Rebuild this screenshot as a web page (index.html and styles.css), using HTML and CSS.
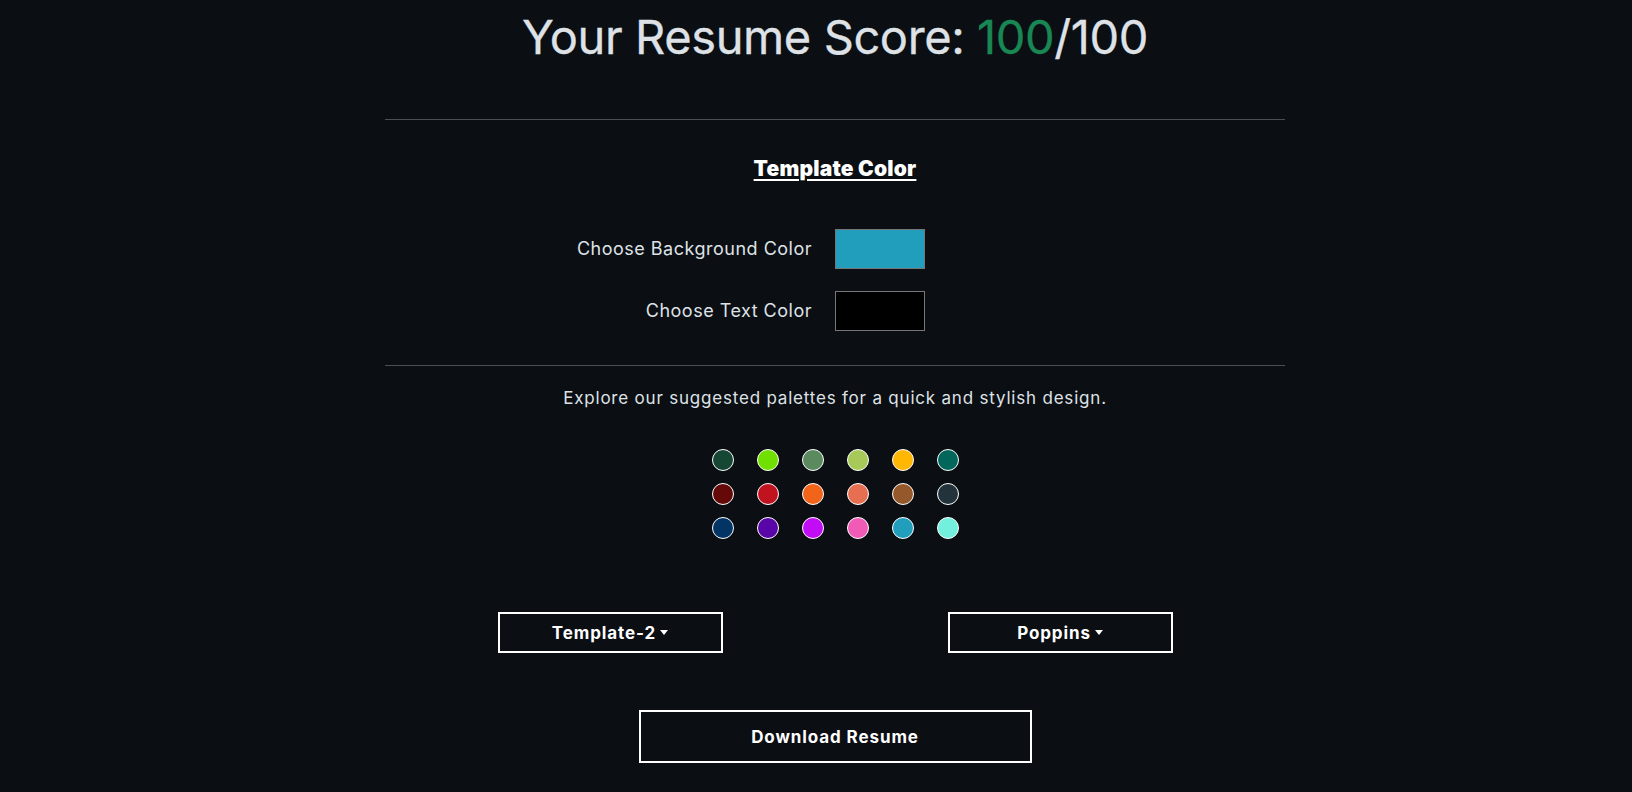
FILE: index.html
```html
<!DOCTYPE html>
<html lang="en">
<head>
<meta charset="utf-8">
<title>Resume Score</title>
<link rel="stylesheet" href="styles.css">
</head>
<body>
<main class="page">
  <h1 class="score">Your Resume Score: <span class="score-value">100</span>/100</h1>
  <hr class="divider divider-top">
  <h2 class="section-title">Template Color</h2>
  <div class="color-rows">
    <label class="color-label">Choose Background Color</label>
    <div class="color-cell"><span class="color-input swatch-bg"></span></div>
    <label class="color-label">Choose Text Color</label>
    <div class="color-cell"><span class="color-input swatch-text"></span></div>
  </div>
  <hr class="divider divider-mid">
  <p class="explore">Explore our suggested palettes for a quick and stylish design.</p>
  <div class="palettes">
    <span class="dot c1"></span><span class="dot c2"></span><span class="dot c3"></span><span class="dot c4"></span><span class="dot c5"></span><span class="dot c6"></span>
    <span class="dot c7"></span><span class="dot c8"></span><span class="dot c9"></span><span class="dot c10"></span><span class="dot c11"></span><span class="dot c12"></span>
    <span class="dot c13"></span><span class="dot c14"></span><span class="dot c15"></span><span class="dot c16"></span><span class="dot c17"></span><span class="dot c18"></span>
  </div>
  <div class="dropdowns">
    <div class="dropdown-col"><button class="btn dropdown-toggle">Template-2</button></div>
    <div class="dropdown-col"><button class="btn dropdown-toggle">Poppins</button></div>
  </div>
  <button class="btn download">Download Resume</button>
</main>
</body>
</html>
```

FILE: styles.css
```css
* { box-sizing: border-box; }

html, body {
  margin: 0;
  background: #0b0e13;
  color: #dee2e6;
  font-family: "Inter", "Liberation Sans", sans-serif;
}

.page {
  display: flex;
  flex-direction: column;
  align-items: center;
  padding-left: 38px;
  min-height: 792px;
}

.score {
  margin: 0;
  padding-top: 8px;
  font-size: 47px;
  line-height: 58px;
  font-weight: 400;
  color: #dee2e6;
  letter-spacing: -0.4px;
  -webkit-text-stroke: 0.3px #dee2e6;
}

.score-value {
  color: #198754;
  -webkit-text-stroke: 0.3px #198754;
}

.divider {
  width: 900px;
  margin: 0;
  border: 0;
  border-top: 1px solid #4b4e53;
}

.divider-top { margin-top: 53px; }

.section-title {
  margin: 37px 0 0;
  font-size: 21px;
  line-height: 24px;
  font-weight: 900;
  color: #fff;
  letter-spacing: 0.2px;
  text-decoration: underline;
  text-underline-offset: 3px;
  text-decoration-thickness: 2px;
}

.color-rows {
  width: 900px;
  margin-top: 48px;
  display: grid;
  grid-template-columns: 1fr 1fr;
  row-gap: 22px;
  align-items: center;
}

.color-label {
  text-align: right;
  padding-right: 23px;
  font-size: 18px;
  letter-spacing: 0.5px;
  line-height: 40px;
}

.color-cell { display: flex; }

.color-input {
  width: 90px;
  height: 40px;
  border: 1px solid #767676;
}

.swatch-bg { background: #219ebc; }
.swatch-text { background: #000; }

.divider-mid { margin-top: 34px; }

.explore {
  margin: 20px 0 0;
  font-size: 17px;
  letter-spacing: 0.8px;
  line-height: 24px;
}

.palettes {
  margin-top: 39px;
  display: grid;
  grid-template-columns: repeat(6, 22px);
  column-gap: 23px;
  row-gap: 12px;
}

.dot {
  width: 22px;
  height: 22px;
  border-radius: 50%;
  border: 1px solid #fff;
}

.c1 { background: #154734; }
.c2 { background: #70e000; }
.c3 { background: #5a8a5e; }
.c4 { background: #a7c957; }
.c5 { background: #ffb703; }
.c6 { background: #02665a; }
.c7 { background: #650808; }
.c8 { background: #c1121f; }
.c9 { background: #f26419; }
.c10 { background: #e76f51; }
.c11 { background: #95582b; }
.c12 { background: #22333b; }
.c13 { background: #023466; }
.c14 { background: #5a05a8; }
.c15 { background: #c20cf5; }
.c16 { background: #f15bb5; }
.c17 { background: #219ebc; }
.c18 { background: #72efdd; }

.dropdowns {
  width: 900px;
  margin-top: 73px;
  display: grid;
  grid-template-columns: 1fr 1fr;
}

.dropdown-col {
  display: flex;
  justify-content: center;
}

.btn {
  background: transparent;
  color: #fff;
  border: 2px solid #fff;
  border-radius: 0;
  font-family: inherit;
  font-weight: 700;
  font-size: 17px;
  letter-spacing: 0.9px;
  cursor: pointer;
  padding: 0;
}

.dropdown-toggle {
  width: 225px;
  height: 41px;
}

.dropdown-toggle::after {
  content: "";
  display: inline-block;
  margin-left: 4px;
  vertical-align: 4px;
  border-top: 5px solid #fff;
  border-left: 4.5px solid transparent;
  border-right: 4.5px solid transparent;
}

.download {
  margin-top: 57px;
  width: 393px;
  height: 53px;
}
```
